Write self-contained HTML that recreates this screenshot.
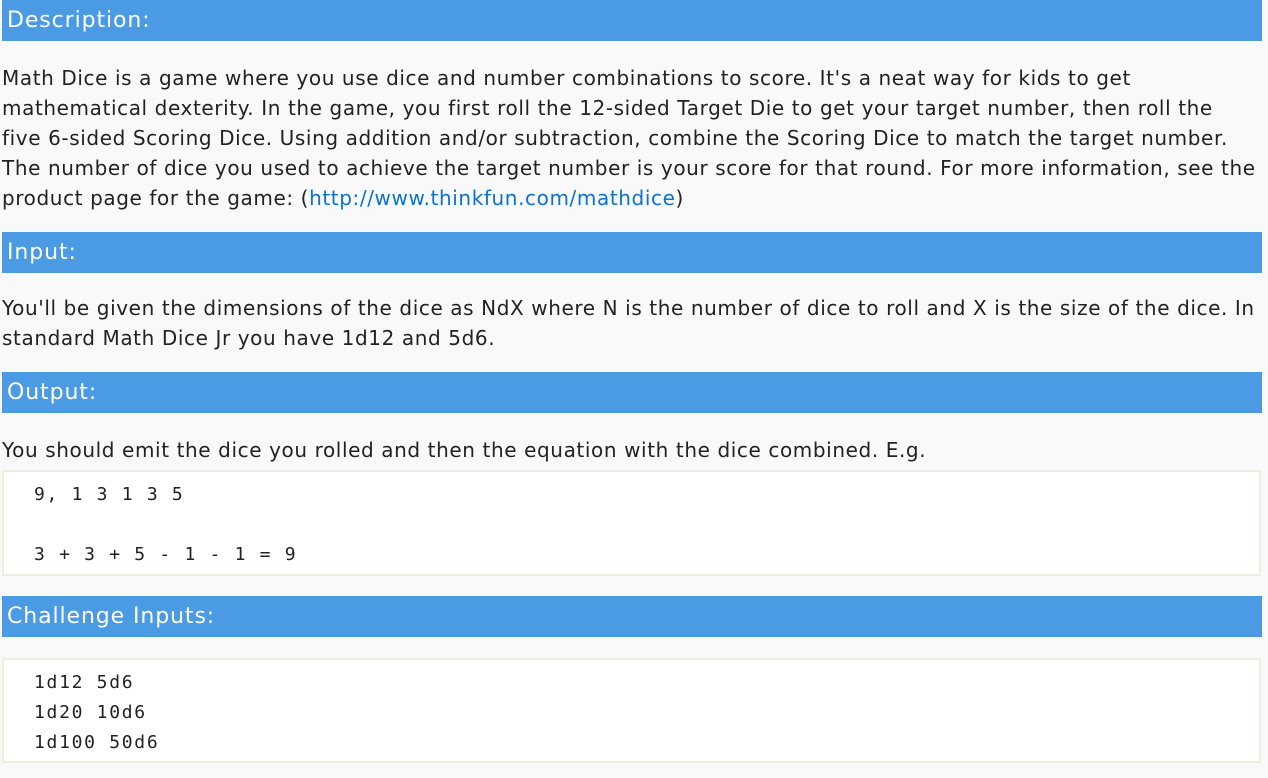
<!DOCTYPE html>
<html><head><style>
body{margin:0;background:#f9f9f9;width:1268px;height:778px;overflow:hidden;font-family:"DejaVu Sans","Liberation Sans",sans-serif;color:#222;}
.h{position:absolute;left:2px;width:1260px;height:41px;background:#4a9ae4;color:#fff;font-size:22px;letter-spacing:0.9px;line-height:41px;padding-left:5px;box-sizing:border-box;}
.t{position:absolute;left:2px;font-size:20px;letter-spacing:0.6px;line-height:30px;white-space:nowrap;}
.c{position:absolute;left:2px;width:1259px;background:#fff;border:2px solid #eef0dc;box-sizing:border-box;font-family:"DejaVu Sans Mono","Liberation Mono",monospace;font-size:18px;letter-spacing:1.7px;line-height:30px;padding-left:30px;white-space:pre;}
a{color:#0a72d0;text-decoration:none}
</style></head><body>
<div class="h" style="top:0">Description:</div>
<div class="t" style="top:63px">Math Dice is a game where you use dice and number combinations to score. It's a neat way for kids to get<br>mathematical dexterity. In the game, you first roll the 12-sided Target Die to get your target number, then roll the<br>five 6-sided Scoring Dice. Using addition and/or subtraction, combine the Scoring Dice to match the target number.<br>The number of dice you used to achieve the target number is your score for that round. For more information, see the<br>product page for the game: (<a>http://www.thinkfun.com/mathdice</a>)</div>
<div class="h" style="top:232px">Input:</div>
<div class="t" style="top:293px">You'll be given the dimensions of the dice as NdX where N is the number of dice to roll and X is the size of the dice. In<br>standard Math Dice Jr you have 1d12 and 5d6.</div>
<div class="h" style="top:372px">Output:</div>
<div class="t" style="top:435px">You should emit the dice you rolled and then the equation with the dice combined. E.g.</div>
<div class="c" style="top:470px;height:106px;padding-top:8px">9, 1 3 1 3 5

3 + 3 + 5 - 1 - 1 = 9</div>
<div class="h" style="top:596px">Challenge Inputs:</div>
<div class="c" style="top:658px;height:105px;padding-top:8px">1d12 5d6
1d20 10d6
1d100 50d6</div>
</body></html>
